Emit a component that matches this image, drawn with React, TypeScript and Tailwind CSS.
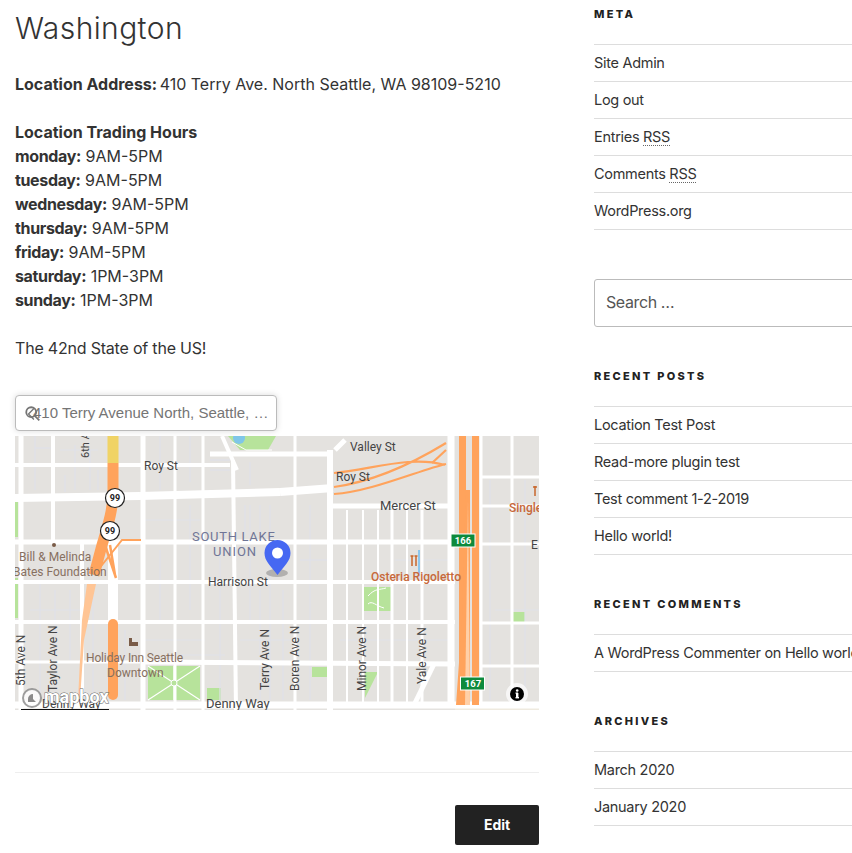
import React from "react";

const hours = [
  ["monday", "9AM-5PM"],
  ["tuesday", "9AM-5PM"],
  ["wednesday", "9AM-5PM"],
  ["thursday", "9AM-5PM"],
  ["friday", "9AM-5PM"],
  ["saturday", "1PM-3PM"],
  ["sunday", "1PM-3PM"],
];

function Heading({ children }: { children: React.ReactNode }) {
  return (
    <h2 className="text-[11px] leading-[14px] font-extrabold uppercase tracking-[2.3px] text-[#222] mb-[23px]">
      {children}
    </h2>
  );
}

function List({ items }: { items: React.ReactNode[] }) {
  return (
    <ul className="border-t border-[#ddd]">
      {items.map((it, i) => (
        <li key={i} className="h-[37px] border-b border-[#ddd] text-[14.5px] tracking-[-0.3px] leading-[36px] text-[#333] whitespace-nowrap">
          {it}
        </li>
      ))}
    </ul>
  );
}

const hRoads: [number, number, number, number, number][] = [
  [15, 465, 230, 465, 4],
  [15, 498, 140, 496, 8],
  [140, 496, 280, 492, 8],
  [280, 492, 333, 488, 8],
  [15, 542, 455, 542, 5],
  [15, 582, 455, 582, 4],
  [15, 622, 455, 622, 4],
  [15, 662, 140, 662, 3],
  [143, 662, 455, 664, 5],
  [15, 705, 539, 705, 7],
  [210, 454, 333, 454, 5],
  [333, 506, 452, 506, 5],
  [480, 477, 539, 477, 3],
  [480, 506, 539, 506, 3],
  [480, 544, 539, 544, 3],
  [480, 623, 539, 623, 3],
  [480, 666, 539, 666, 3],
];

const vRoads: [number, number, number, number, number][] = [
  [21, 436, 21, 710, 5],
  [53, 436, 53, 540, 4],
  [82, 540, 82, 710, 4],
  [143, 436, 143, 710, 5],
  [175, 436, 175, 710, 3],
  [203, 436, 203, 710, 3],
  [233, 460, 236, 710, 4],
  [222, 436, 237, 470, 4],
  [295, 436, 295, 710, 3],
  [330, 450, 330, 710, 6],
  [347, 510, 347, 705, 2],
  [363, 510, 363, 705, 2],
  [378, 510, 378, 705, 2],
  [392, 510, 392, 705, 3],
  [407, 510, 407, 705, 2],
  [422, 510, 422, 705, 3],
  [451, 436, 451, 705, 7],
  [481, 436, 481, 705, 3],
  [512, 436, 512, 705, 3],
  [113, 540, 113, 622, 10],
  [434, 664, 415, 703, 5],
  [335, 450, 345, 440, 5],
];

const thin: [number, number, number, number][] = [
  [35, 436, 35, 490], [75, 445, 75, 490], [90, 450, 90, 490], [35, 448, 55, 448], [60, 450, 98, 450],
  [65, 475, 65, 492], [98, 470, 98, 490], [160, 436, 160, 490], [190, 436, 190, 482], [250, 462, 250, 485],
  [40, 550, 40, 700], [55, 590, 55, 700], [70, 590, 70, 660], [93, 590, 93, 700], [125, 630, 125, 700],
  [160, 550, 160, 620], [190, 505, 190, 610], [220, 550, 220, 700], [250, 505, 250, 620], [260, 590, 260, 700],
  [270, 505, 270, 700], [283, 590, 283, 700], [310, 505, 310, 700],
  [180, 655, 225, 655], [30, 610, 90, 610], [145, 640, 205, 640], [240, 640, 295, 640], [300, 560, 330, 560],
  [340, 640, 450, 640], [395, 560, 450, 560], [490, 480, 490, 700], [525, 480, 525, 700], [495, 610, 540, 610],
  [245, 505, 245, 535], [260, 505, 260, 535], [145, 520, 200, 520], [210, 460, 230, 460], [210, 470, 230, 470],
];

function MapArt() {
  const label = "font-['Roboto',sans-serif]";
  return (
    <svg viewBox="15 436 524 274" className="block w-full h-[274px]">
      <rect x="15" y="436" width="524" height="274" fill="#e4e2df" />
      {/* parks */}
      <path d="M228 436H276L268 450H240Z" fill="#b7e39b" />
      <circle cx="239" cy="438" r="6" fill="#7fc6e8" />
      <rect x="148" y="666" width="52" height="34" fill="#b7e39b" />
      <rect x="207" y="688" width="14" height="12" fill="#b7e39b" />
      <rect x="312" y="667" width="15" height="10" fill="#b7e39b" />
      <path d="M365 672H378L365 698Z" fill="#b7e39b" />
      <rect x="364" y="587" width="27" height="24" fill="#b7e39b" />
      <rect x="513" y="612" width="12" height="10" fill="#b7e39b" />
      <rect x="15" y="502" width="3" height="35" fill="#b7e39b" />
      <rect x="15" y="578" width="3" height="40" fill="#b7e39b" />
      <rect x="455" y="702" width="84" height="8" fill="#efeadf" />
      {/* thin service lines */}
      {thin.map(([a, b, c, d], i) => (
        <line key={i} x1={a} y1={b} x2={c} y2={d} stroke="#e0e1ea" strokeWidth="1.2" />
      ))}
      {/* roads */}
      {hRoads.map(([a, b, c, d, w], i) => (
        <line key={i} x1={a} y1={b} x2={c} y2={d} stroke="#fff" strokeWidth={w} />
      ))}
      {vRoads.map(([a, b, c, d, w], i) => (
        <line key={i} x1={a} y1={b} x2={c} y2={d} stroke="#fff" strokeWidth={w} />
      ))}
      {/* park paths */}
      <path d="M148 666L200 700M200 666L148 700M174 666V700" stroke="#fff" strokeWidth="1.2" fill="none" />
      <circle cx="174" cy="683" r="3" fill="#b7e39b" stroke="#fff" />
      <path d="M368 596C375 588 380 590 386 588M368 604C372 600 376 606 384 608" stroke="#fff" strokeWidth="1" fill="none" />
      <path d="M232 442L246 450H272" stroke="#fff" strokeWidth="1" fill="none" />
      {/* left highway */}
      <path d="M113 436V463" stroke="#f0d365" strokeWidth="11" />
      <path d="M113 463V492C113 510 108 525 102 545L94 575" stroke="#ffa35c" strokeWidth="11" fill="none" />
      <path d="M98 570L122 540H141" stroke="#ffa35c" strokeWidth="2" fill="none" />
      <path d="M106 548L116 578M110 545L115 575" stroke="#ffa35c" strokeWidth="2.5" fill="none" />
      <path d="M87 584H96L84 640L80 700H78L82 620Z" fill="#ffc595" />
      <path d="M113 624V695" stroke="#ffa35c" strokeWidth="10" strokeLinecap="round" />
      {/* ramps */}
      <path d="M334 487C370 482 410 465 446 443M334 494C370 492 420 470 446 464M334 473C370 470 410 455 445 465" stroke="#ffa35c" strokeWidth="2.2" fill="none" />
      <path d="M432 463L446 450" stroke="#ffa35c" strokeWidth="2.2" fill="none" />
      {/* right highway */}
      <rect x="459" y="436" width="7" height="269" fill="#ffa35c" />
      <rect x="472" y="436" width="7" height="269" fill="#ffa35c" />
      <path d="M466 490H470V705H456L462 620Z" fill="#ffa35c" />
      <path d="M468 500L470 705H465Z" fill="#ffd0a8" />
      {/* restaurant accents */}
      <rect x="418" y="550" width="2" height="26" fill="#8cc6ec" />
      <path d="M412 556V566M416 556V566M410.500 556H413.500M414.500 556H417.500" stroke="#c8672c" strokeWidth="1.500" />
      <path d="M535 486V496M533 487H537" stroke="#c8672c" strokeWidth="1.500" />
      {/* shields */}
      <g>
        <circle cx="115" cy="498" r="9.500" fill="#fff" stroke="#222" strokeWidth="1.200" />
        <text x="115" y="501" textAnchor="middle" fontSize="9" fontWeight="700" fill="#222" className={label}>99</text>
        <circle cx="110" cy="531" r="9.500" fill="#fff" stroke="#222" strokeWidth="1.200" />
        <text x="110" y="534" textAnchor="middle" fontSize="9" fontWeight="700" fill="#222" className={label}>99</text>
      </g>
      <g>
        <rect x="451" y="534" width="24" height="13" fill="#0d8a3c" stroke="#fff" />
        <text x="463" y="544" textAnchor="middle" fontSize="9.500" fontWeight="700" fill="#fff" className={label}>166</text>
        <rect x="460.500" y="677" width="24" height="13" fill="#0d8a3c" stroke="#fff" />
        <text x="473" y="687" textAnchor="middle" fontSize="9.500" fontWeight="700" fill="#fff" className={label}>167</text>
      </g>
      {/* labels */}
      <g fontSize="12" fill="#444" className={label}>
        <text x="144" y="470">Roy St</text>
        <text x="350" y="451">Valley St</text>
        <text x="336" y="481">Roy St</text>
        <text x="380" y="510" fontSize="13">Mercer St</text>
        <text x="208" y="586">Harrison St</text>
        <text x="206" y="708" fontSize="13">Denny Way</text>
        <text x="42" y="708" fontSize="12">Denny Way</text>
        <text x="531" y="549" fontSize="12">E</text>
        <text transform="translate(89 458) rotate(-90)" fontSize="11">6th A</text>
        <text transform="translate(25 686) rotate(-90)">5th Ave N</text>
        <text transform="translate(57 692) rotate(-90)">Taylor Ave N</text>
        <text transform="translate(269 690) rotate(-90)">Terry Ave N</text>
        <text transform="translate(299 691) rotate(-90)">Boren Ave N</text>
        <text transform="translate(366 691) rotate(-90)">Minor Ave N</text>
        <text transform="translate(426 684) rotate(-90)">Yale Ave N</text>
      </g>
      <g fontSize="12" fill="#87705f" className={label}>
        <circle cx="54" cy="545" r="2" fill="#7a5c48" />
        <text x="19" y="561">Bill &amp; Melinda</text>
        <text x="13" y="576">Bates Foundation</text>
        <text x="86" y="662" letterSpacing="-0.15">Holiday Inn Seattle</text>
        <text x="107" y="677">Downtown</text>
        <path d="M129 638V646H138V642H132V638Z" fill="#7a5c48" />
      </g>
      <g fontSize="12" fill="#c7683a" className={label} fontWeight="500">
        <text x="371" y="581">Osteria Rigoletto</text>
        <text x="509" y="512">Single</text>
      </g>
      <text x="192" y="541" fontSize="13" letterSpacing="0.7" fill="#6f7596" className={label}>SOUTH LAKE</text>
      <text x="213" y="556" fontSize="13" letterSpacing="0.9" fill="#6f7596" className={label}>UNION</text>
      {/* pin */}
      <ellipse cx="277" cy="573" rx="11" ry="4" fill="#000" opacity="0.22" />
      <path d="M277.500 575C270 565 264.500 561 264.500 553A13 13 0 0 1 290.500 553C290.500 561 285 565 277.500 575Z" fill="#4668f2" />
      <circle cx="277.500" cy="553" r="5.500" fill="#fff" />
      {/* mapbox logo */}
      <circle cx="32" cy="698" r="9" fill="#fff" fillOpacity="0.8" stroke="#777" strokeOpacity="0.7" strokeWidth="2" />
      <path d="M28 699a5 5 0 0 1 5-5v5l3 3h-8Z" fill="#777" opacity="0.85" />
      <text x="44" y="703" fontSize="18" fontWeight="700" fill="#fff" stroke="#666" strokeWidth="0.9" paintOrder="stroke" className={label}>mapbox</text>
      <rect x="21" y="709" width="88" height="1" fill="#111" />
      {/* info */}
      <circle cx="517" cy="694" r="11" fill="#fff" fillOpacity="0.7" />
      <circle cx="517" cy="694" r="7" fill="#000" />
      <rect x="516" y="693" width="2.400" height="5" fill="#fff" />
      <rect x="515.500" y="697" width="3.500" height="1.400" fill="#fff" />
      <rect x="515.500" y="692.500" width="2.500" height="1.200" fill="#fff" />
      <circle cx="517.200" cy="690.500" r="1.300" fill="#fff" />
    </svg>
  );
}

export default function App() {
  return (
    <div className="w-[852px] h-[853px] overflow-hidden bg-white flex font-['Inter','Liberation_Sans',sans-serif] text-[#333]">
      <main className="ml-[15px] w-[524px] shrink-0">
        <h1 className="text-[30px] leading-[36px] font-light tracking-[0.4px] text-[#333] mt-[10px] mb-[26px]">Washington</h1>
        <p className="text-[16px] leading-[24px]"><b>Location Address:</b> <span className="-ml-[2px]">410 Terry Ave. North Seattle, WA 98109-5210</span></p>
        <div className="mt-[24px] text-[16px] leading-[24px]">
          <div className="font-bold">Location Trading Hours</div>
          {hours.map(([d, h]) => (
            <div key={d}><b className="tracking-[-0.35px]">{d}:</b> {h}</div>
          ))}
        </div>
        <p className="mt-[24px] text-[16px] leading-[24px] tracking-[-0.2px]">The 42nd State of the US!</p>
        <div className="relative mt-[35px] pt-[41px]">
          <div className="absolute left-0 top-0 z-10 w-[262px] h-[36px] bg-white rounded-[4px] border border-[#bbb] shadow-[0_0_6px_rgba(0,0,0,0.15)] flex items-center pl-[17px] text-[15px] text-[#757575] font-['Liberation_Sans',sans-serif] whitespace-nowrap">
            <span>410 Terry Avenue North, Seattle, …</span>
            <svg viewBox="0 0 20 20" className="absolute left-[8px] top-[9px] w-[18px] h-[18px]" fill="none" stroke="#757575" strokeWidth="2">
              <circle cx="8" cy="8" r="5.500" />
              <path d="M12 12l5 5" />
              <path d="M11 4L5 10l6 6" strokeWidth="1.500" />
            </svg>
          </div>
          <MapArt />
        </div>
        <div className="mt-[62px] border-t border-[#eee]" />
        <div className="mt-[32px] flex justify-end">
          <button className="w-[84px] h-[40px] pb-[2px] bg-[#222] text-white text-[14px] font-bold rounded-[2px]">Edit</button>
        </div>
      </main>
      <aside className="ml-[55px] w-[300px] shrink-0 pt-[7px]">
        <Heading>Meta</Heading>
        <List
          items={[
            "Site Admin",
            "Log out",
            <>Entries <span className="border-b border-dotted border-[#666]">RSS</span></>,
            <>Comments <span className="border-b border-dotted border-[#666]">RSS</span></>,
            "WordPress.org",
          ]}
        />
        <div className="mt-[49px] h-[48px] border border-[#bbb] rounded-[3px] flex items-center pl-[11px] pb-[2px] text-[16px] tracking-[-0.4px] text-[#555]">Search …</div>
        <div className="mt-[42px]">
          <Heading>Recent Posts</Heading>
          <List items={["Location Test Post", "Read-more plugin test", "Test comment 1-2-2019", "Hello world!"]} />
        </div>
        <div className="mt-[42px]">
          <Heading>Recent Comments</Heading>
          <List items={[<>A WordPress Commenter on Hello world!</>]} />
        </div>
        <div className="mt-[42px]">
          <Heading>Archives</Heading>
          <List items={["March 2020", "January 2020"]} />
        </div>
      </aside>
    </div>
  );
}
